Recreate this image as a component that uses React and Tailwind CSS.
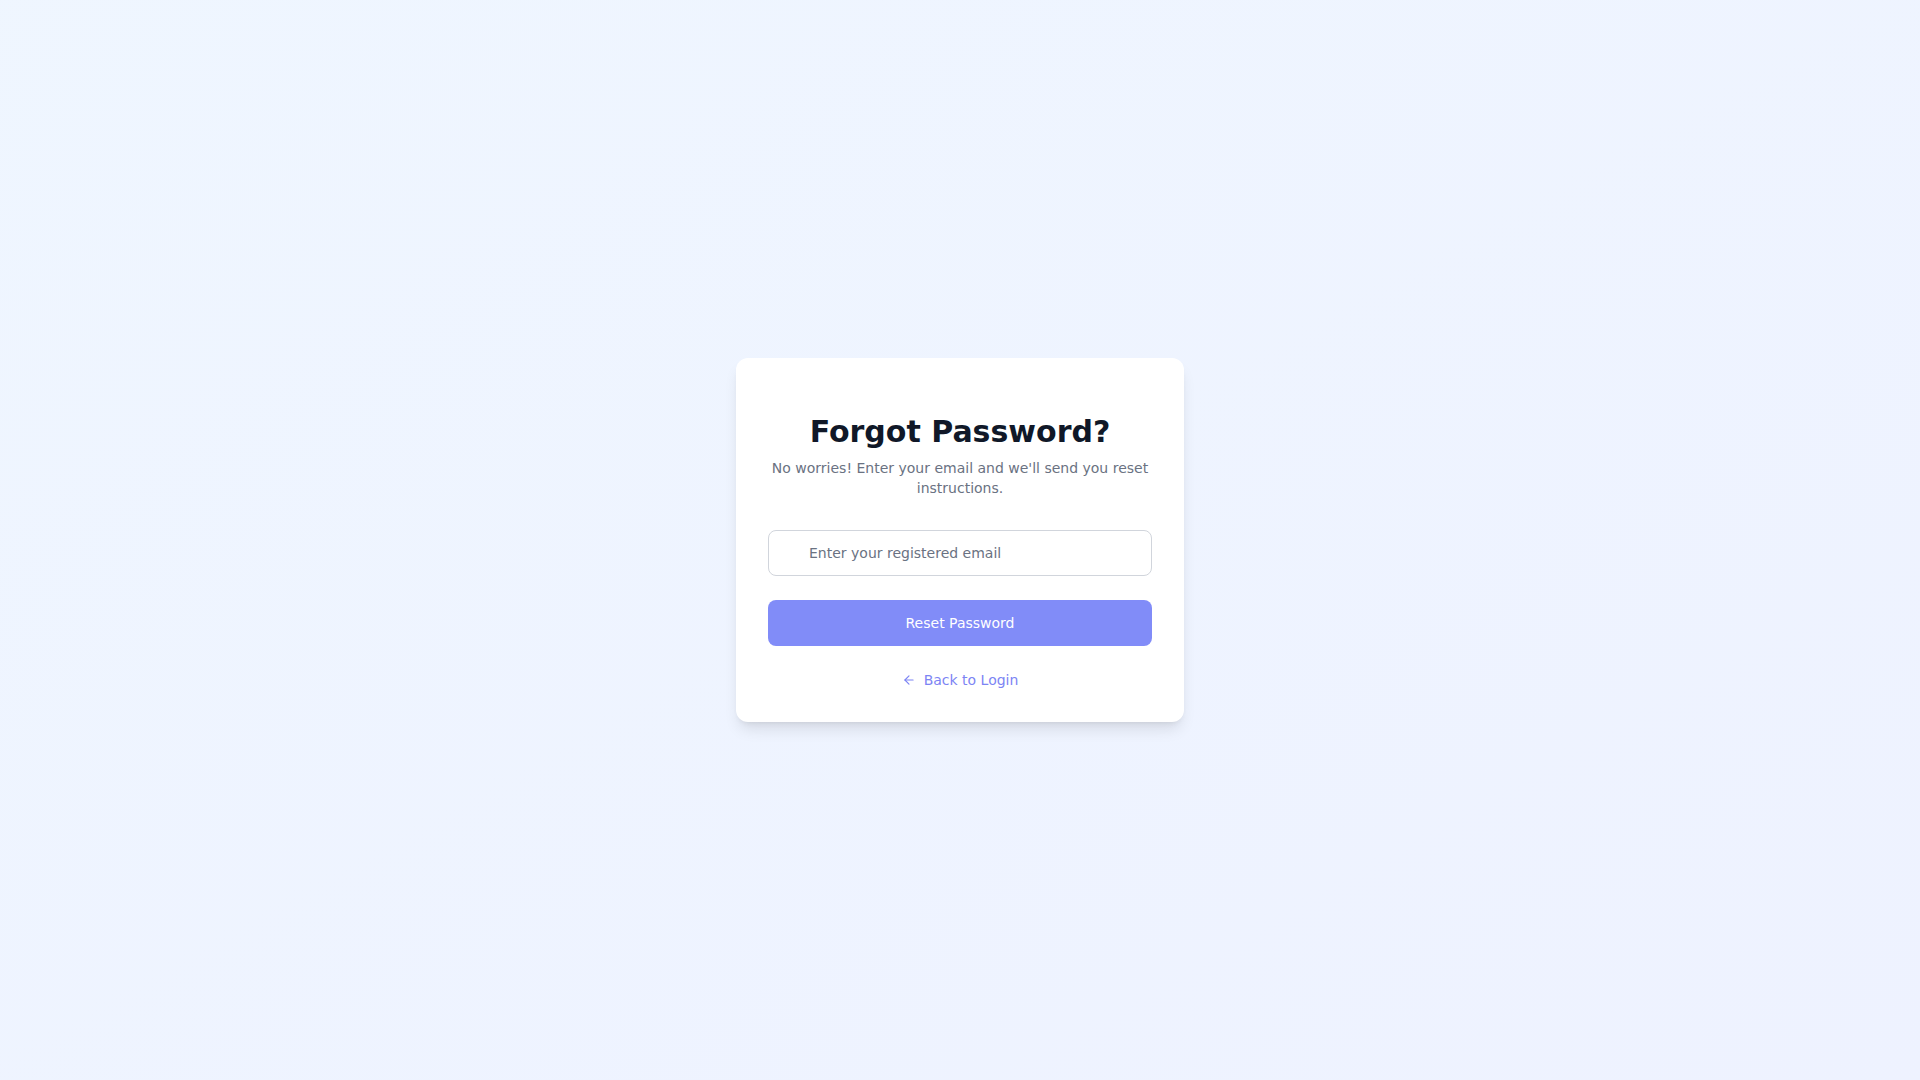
import { ArrowLeft } from 'lucide-react'

export default function App() {
  return (
    <div
      className="min-h-screen flex items-center justify-center bg-gradient-to-br from-blue-50 to-indigo-50"
      style={{ fontFamily: '"DejaVu Sans", sans-serif' }}
    >
      <div className="w-[448px] bg-white rounded-xl shadow-lg p-8">
        {/* Header */}
        <div className="text-center mt-6 mb-8">
          <h1 className="text-3xl font-bold text-gray-900">Forgot Password?</h1>
          <p className="mt-2 text-sm text-gray-500">
            No worries! Enter your email and we'll send you reset instructions.
          </p>
        </div>

        <div className="relative">
          <input
            type="email"
            placeholder="Enter your registered email"
            className="w-full border border-gray-300 rounded-lg pl-10 pr-4 py-3 text-sm text-gray-900 placeholder-gray-500 focus:outline-none"
          />
        </div>

        <button className="mt-6 w-full bg-[#818cf8] text-white text-sm rounded-lg py-[13px]">
          Reset Password
        </button>

        <div className="mt-6 flex justify-center">
          <a href="#" className="flex items-center gap-2 text-sm text-[#7c84f4]">
            <ArrowLeft className="w-3.5 h-3.5" />
            Back to Login
          </a>
        </div>
      </div>
    </div>
  )
}
